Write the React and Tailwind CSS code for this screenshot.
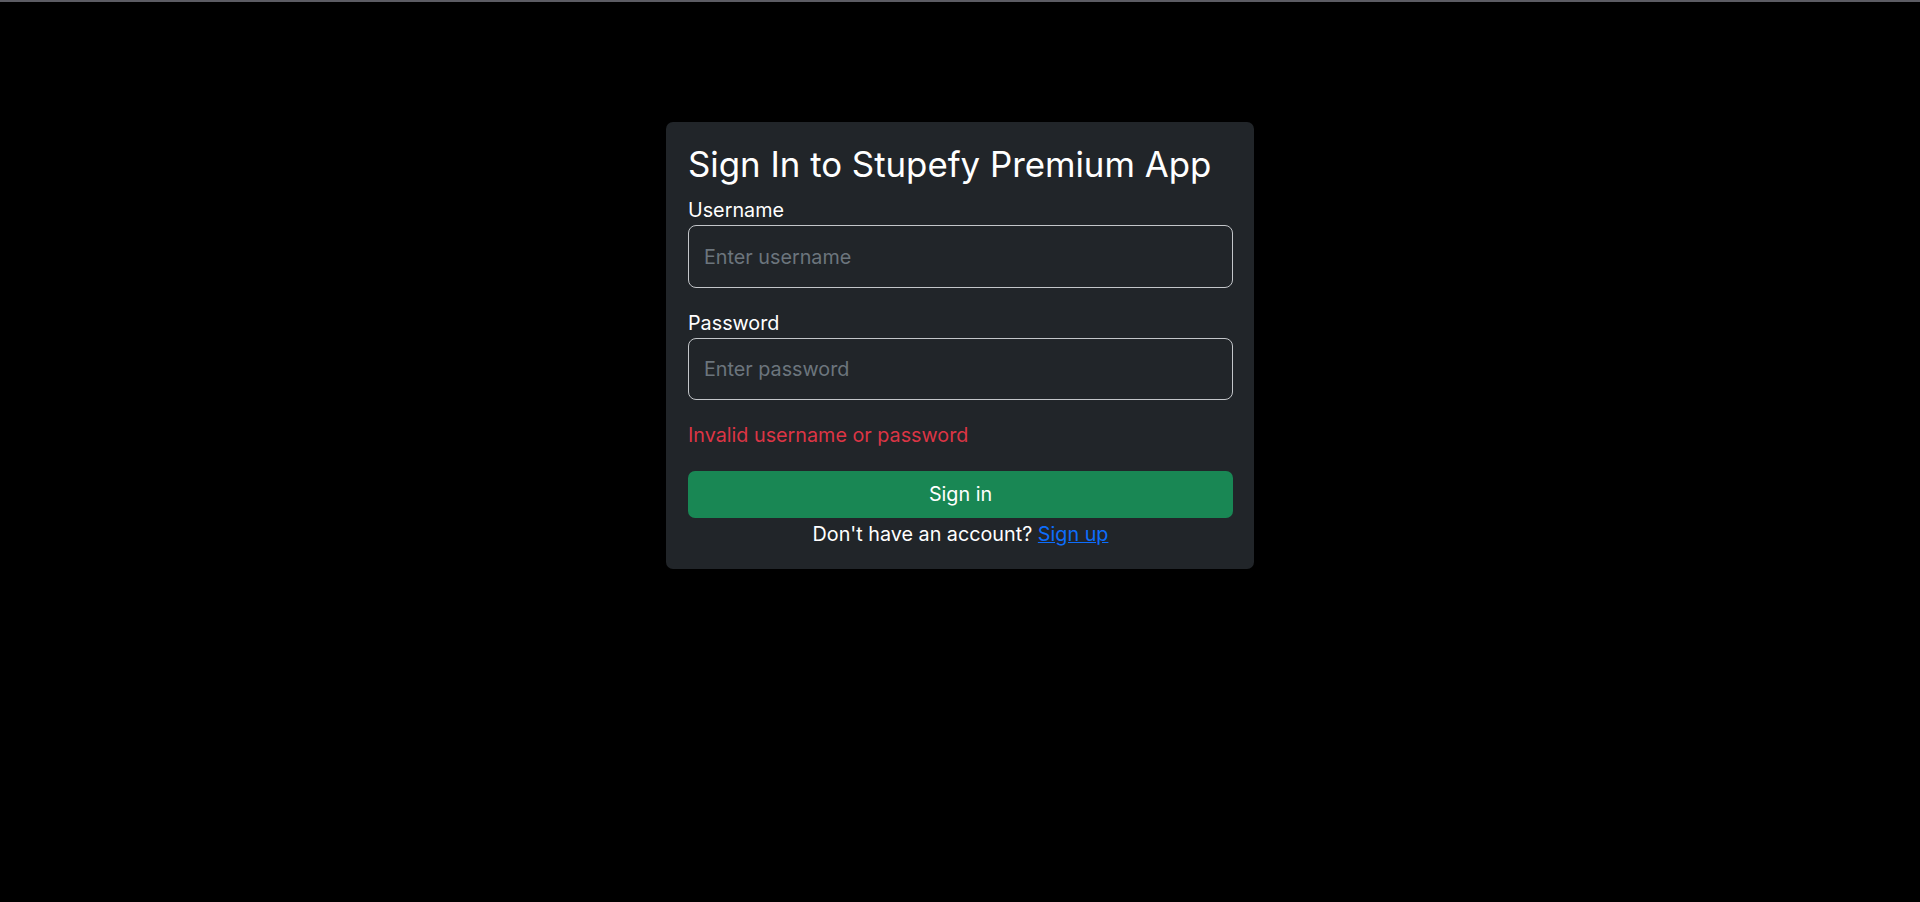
import React, { useState } from 'react';

export default function App() {
  const [username, setUsername] = useState('');
  const [password, setPassword] = useState('');

  return (
    <div
      className="min-h-screen bg-black border-t-2 border-[#5c5c63] flex justify-center"
      style={{ fontFamily: 'Inter, "Noto Sans", sans-serif' }}
    >
      <div className="mt-[120px] w-[588px] self-start bg-[#212529] rounded-[7px] pl-[22px] pr-[21px] pt-[21px] pb-[20px] text-white">
        <h3 className="text-[34.8px] leading-[42px] font-normal mb-[10px]">Sign In to Stupefy Premium App</h3>

        <form onSubmit={(e) => e.preventDefault()}>
          <label className="block text-[19.75px] leading-[30px]">Username</label>
          <input
            type="text"
            value={username}
            onChange={(e) => setUsername(e.target.value)}
            placeholder="Enter username"
            className="w-full h-[63px] bg-[#212529] border border-[#c3c6c9] rounded-[8px] px-[15px] text-[19.75px] text-white placeholder:text-[#6c757d] outline-none mb-[20px]"
          />

          <label className="block text-[19.75px] leading-[30px]">Password</label>
          <input
            type="password"
            value={password}
            onChange={(e) => setPassword(e.target.value)}
            placeholder="Enter password"
            className="w-full h-[62px] bg-[#212529] border border-[#c3c6c9] rounded-[8px] px-[15px] text-[19.75px] text-white placeholder:text-[#6c757d] outline-none mb-[20px]"
          />

          <p className="text-[19.75px] leading-[30px] text-[#dc3545] mb-[21px]">Invalid username or password</p>

          <button
            type="submit"
            className="w-full h-[47px] bg-[#198754] rounded-[7px] text-[19.75px] text-white"
          >
            Sign in
          </button>

          <p className="text-center text-[19.75px] leading-[30px] mt-[1px]">
            Don't have an account?{' '}
            <a href="#" className="text-[#0d6efd] underline">Sign up</a>
          </p>
        </form>
      </div>
    </div>
  );
}
